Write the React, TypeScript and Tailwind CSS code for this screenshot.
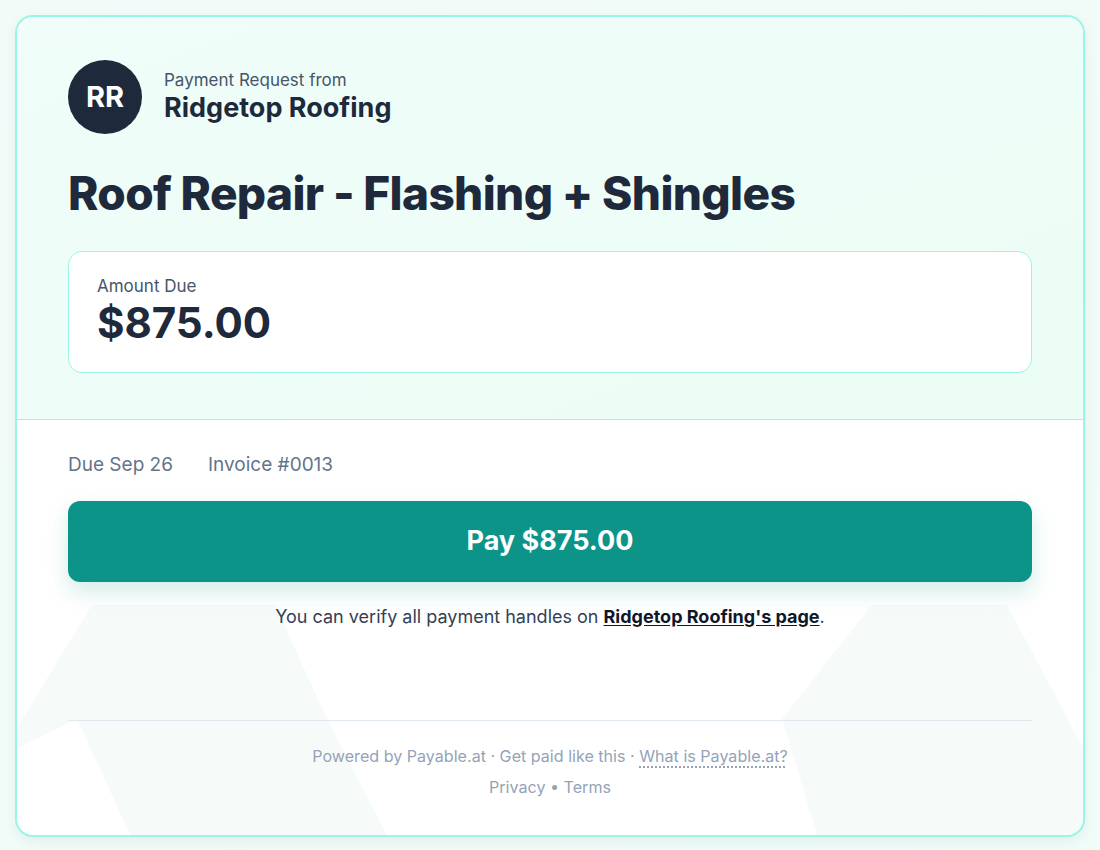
import React from "react"

const font = { fontFamily: "Inter, 'Noto Sans', sans-serif" }

function BackgroundShapes() {
  return (
    <svg
      className="absolute inset-0 w-full h-full pointer-events-none"
      viewBox="0 0 1066 418"
      preserveAspectRatio="none"
    >
      <polygon points="75,186 258,186 310,301 60,301 0,331 0,310" fill="#f6fbfa" />
      <polygon points="60,301 310,301 370,418 113,418" fill="#f6fbfa" />
      <polygon points="990,186 1066,330 1066,418 800,418 765,301" fill="#f6fbfa" />
      <polygon points="765,301 990,186 855,186" fill="#f6fbfa" />
    </svg>
  )
}

export default function App() {
  return (
    <div className="min-h-[850px] w-full bg-gradient-to-br from-[#f3fbf9] to-[#effcf8] p-[15px]" style={font}>
      <div className="rounded-[18px] border-2 border-[#99f6e4] overflow-hidden bg-white shadow-[0_4px_14px_rgba(15,23,42,0.06)]">
        <section className="bg-gradient-to-br from-[#f0fdfa] to-[#ecfdf5] px-[51px] pt-[43px] pb-[46px] border-b border-[#99f6e4]">
          <div className="flex items-center gap-[22px]">
            <div className="w-[74px] h-[74px] rounded-full bg-[#1e293b] flex items-center justify-center text-white text-[29px] font-bold">
              RR
            </div>
            <div className="flex flex-col">
              <span className="text-[17px] leading-[22px] text-[#475569]">Payment Request from</span>
              <span className="text-[27px] leading-[34px] font-bold text-[#1e293b]">Ridgetop Roofing</span>
            </div>
          </div>
          <h1 className="mt-[31px] text-[46px] leading-[56px] font-extrabold tracking-[-0.65px] text-[#1e293b]">
            Roof Repair - Flashing + Shingles
          </h1>
          <div className="mt-[30px] bg-white border border-[#99f6e4] rounded-[14px] px-[28px] pt-[23px] pb-[23px]">
            <div className="text-[17px] leading-[22px] text-[#475569]">Amount Due</div>
            <div className="text-[42px] leading-[52px] font-bold text-[#1e293b]">$875.00</div>
          </div>
        </section>
        <section className="relative px-[51px] pt-[32px] pb-[36px]">
          <BackgroundShapes />
          <div className="relative">
            <div className="flex gap-[35px] text-[19px] leading-[26px] text-[#64748b]">
              <span>Due Sep 26</span>
              <span>Invoice #0013</span>
            </div>
            <button className="mt-[23px] w-full h-[81px] rounded-[12px] bg-[#0d9488] text-white text-[27px] font-bold shadow-[0_10px_22px_rgba(13,148,136,0.18)]">
              Pay $875.00
            </button>
            <p className="mt-[22px] text-center text-[18px] leading-[26px] text-[#334155]">
              You can verify all payment handles on{" "}
              <span className="font-bold text-[#0f172a] underline underline-offset-2">Ridgetop Roofing's page</span>.
            </p>
            <div className="mt-[90px] border-t border-[#e2e8f0] pt-[23px] text-center text-[16.1px] text-[#94a3b8]">
              <div className="leading-[24px]">
                Powered by Payable.at · Get paid like this ·{" "}
                <span className="underline decoration-dotted decoration-2 underline-offset-4">What is Payable.at?</span>
              </div>
              <div className="mt-[7px] leading-[24px]">Privacy • Terms</div>
            </div>
          </div>
        </section>
      </div>
    </div>
  )
}
